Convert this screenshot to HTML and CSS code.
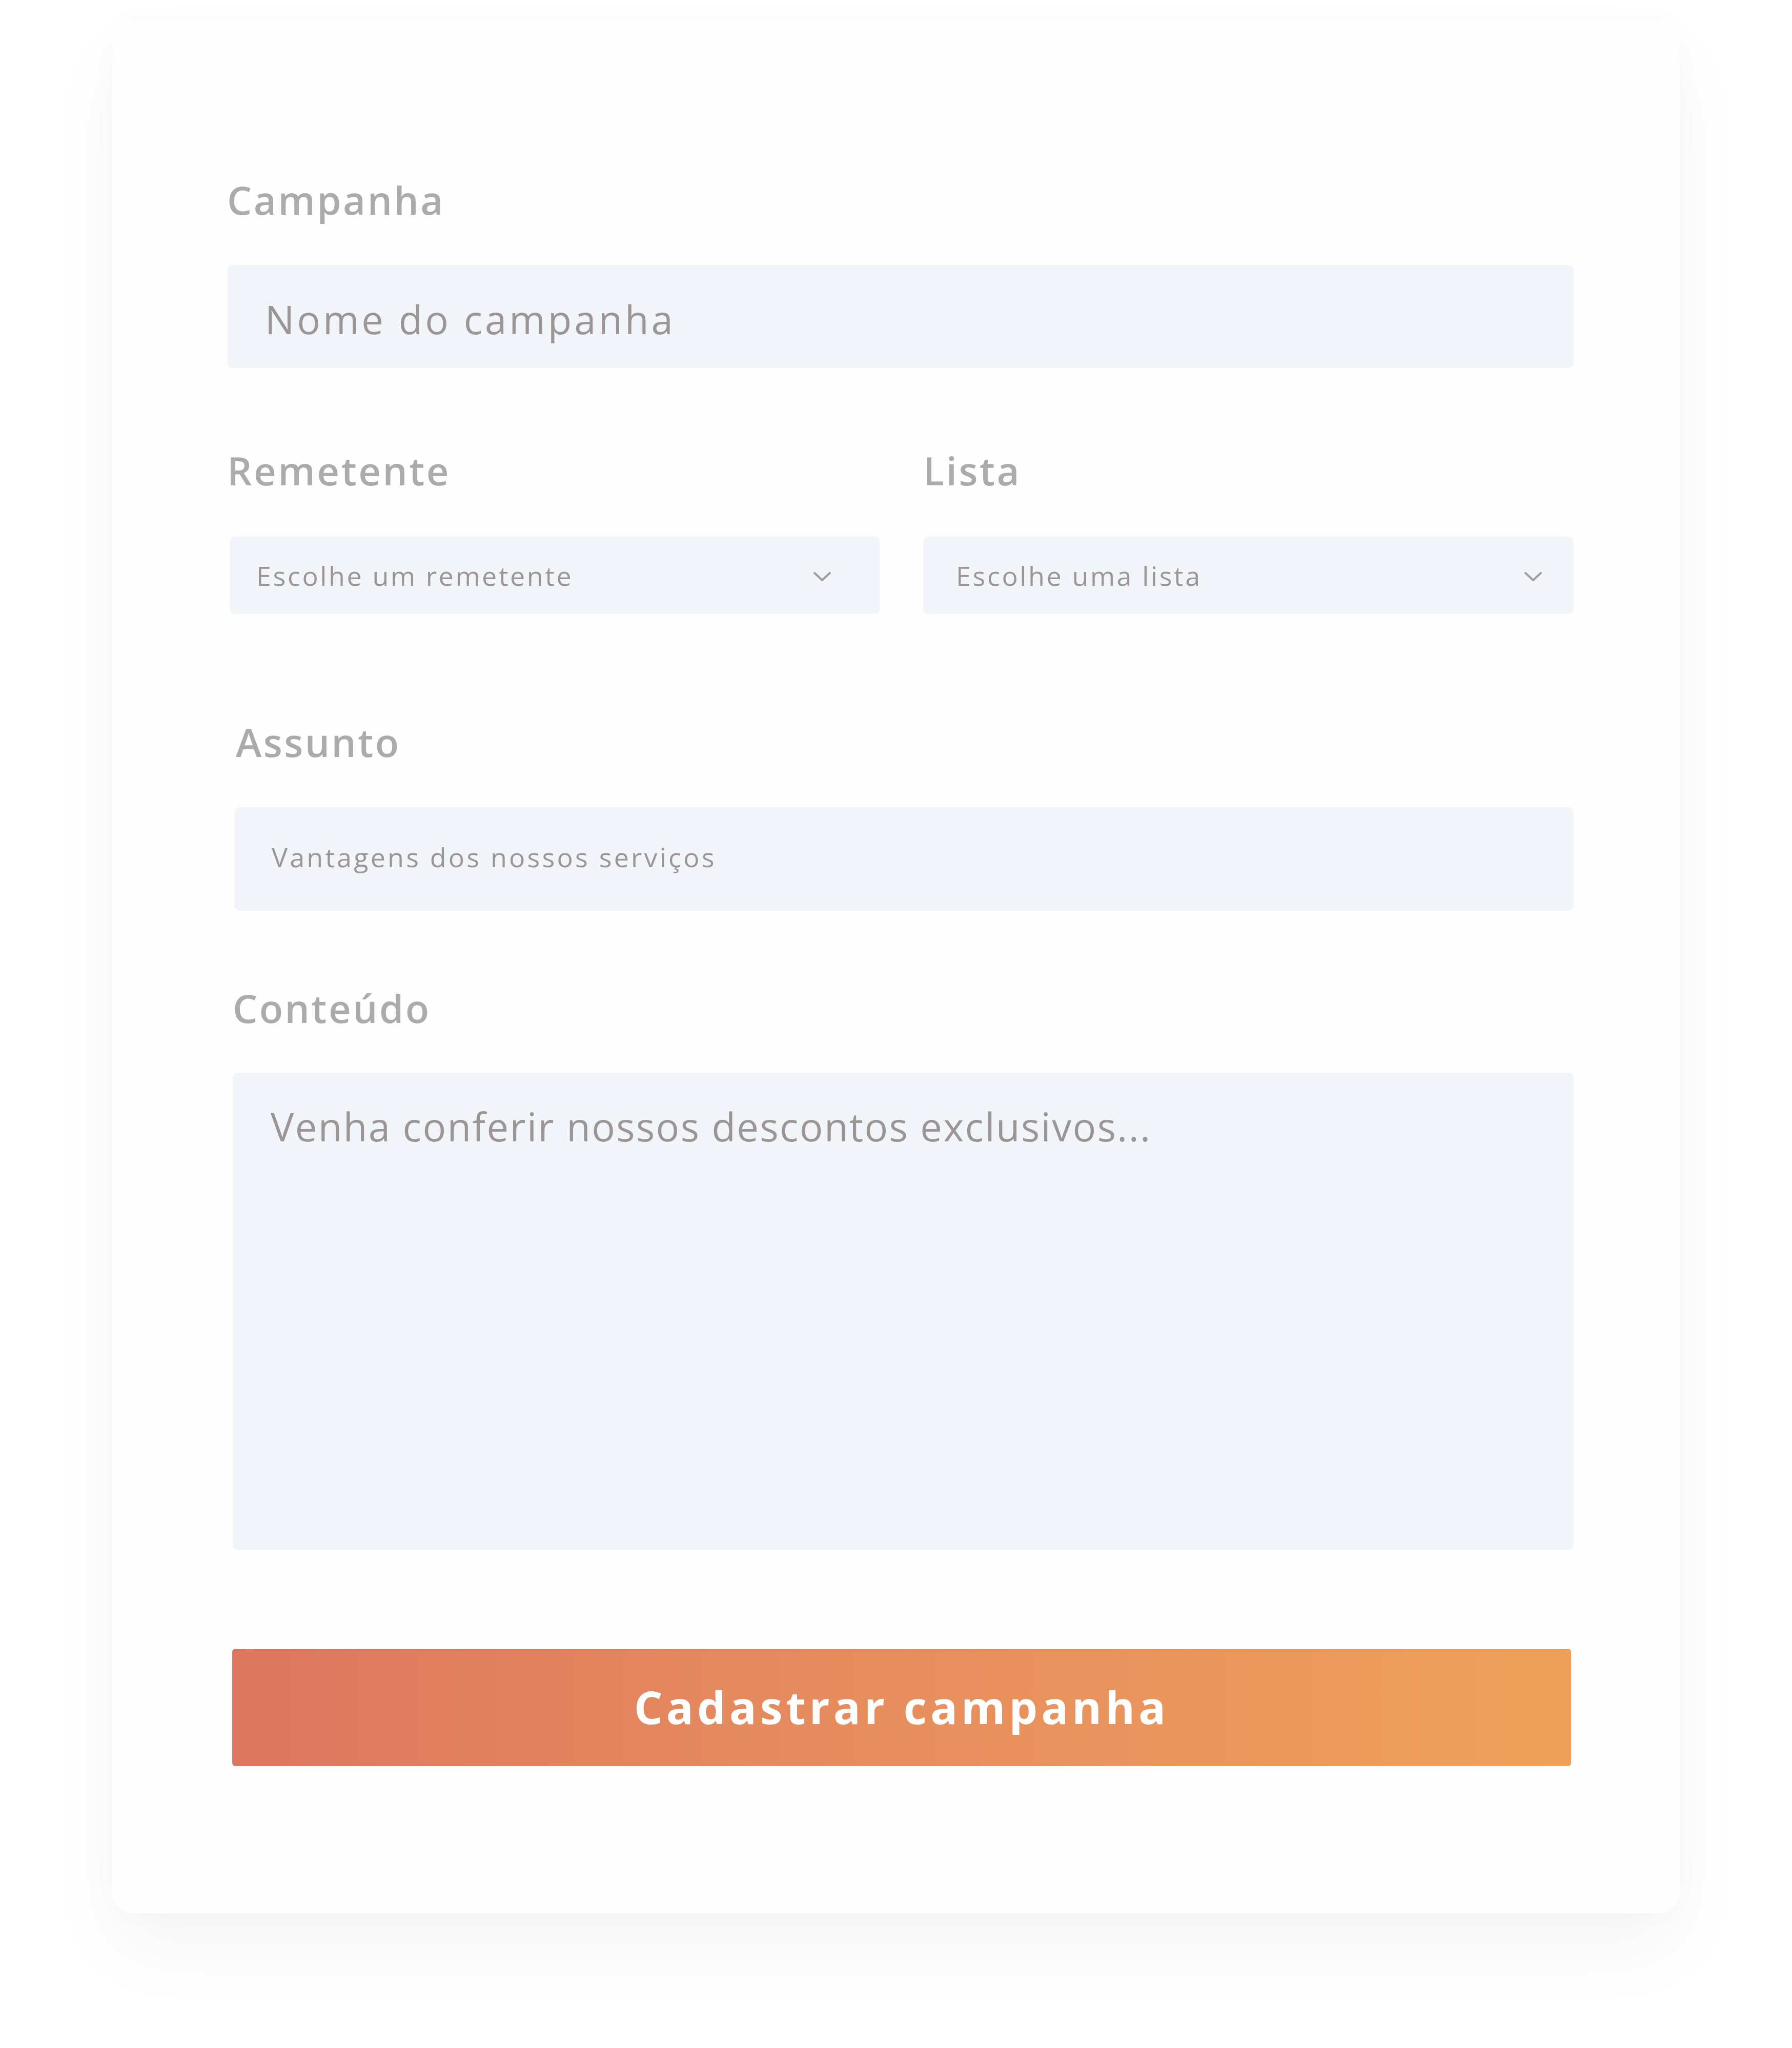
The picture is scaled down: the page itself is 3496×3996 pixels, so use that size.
FILE: index.html
```html
<!DOCTYPE html>
<html lang="pt">
<head>
<meta charset="utf-8">
<title>Cadastrar campanha</title>
<link rel="stylesheet" href="styles.css">
</head>
<body>
<div class="page">
  <form class="card">
    <div class="field">
      <label class="label">Campanha</label>
      <div class="input input--lg">Nome do campanha</div>
    </div>

    <div class="row">
      <div class="field">
        <label class="label">Remetente</label>
        <div class="select select--a">
          <span class="select-text">Escolhe um remetente</span>
          <svg class="chev" viewBox="0 0 36 20" width="36" height="20"><path d="M3 3 L18 17 L33 3" fill="none" stroke="#a39c9c" stroke-width="4" stroke-linecap="round" stroke-linejoin="round"/></svg>
        </div>
      </div>
      <div class="field">
        <label class="label">Lista</label>
        <div class="select select--b">
          <span class="select-text">Escolhe uma lista</span>
          <svg class="chev" viewBox="0 0 36 20" width="36" height="20"><path d="M3 3 L18 17 L33 3" fill="none" stroke="#a39c9c" stroke-width="4" stroke-linecap="round" stroke-linejoin="round"/></svg>
        </div>
      </div>
    </div>

    <div class="field field--assunto">
      <label class="label">Assunto</label>
      <div class="input input--sm">Vantagens dos nossos serviços</div>
    </div>

    <div class="field field--conteudo">
      <label class="label">Conteúdo</label>
      <div class="textarea">Venha conferir nossos descontos exclusivos...</div>
    </div>

    <button type="button" class="btn">Cadastrar campanha</button>
  </form>
</div>
</body>
</html>
```

FILE: styles.css
```css
html, body {
  margin: 0;
  padding: 0;
  background: #ffffff;
}
body {
  width: 3496px;
  height: 3996px;
  overflow: hidden;
  font-family: "Open Sans", "Noto Sans", sans-serif;
}
.page {
  padding-top: 40px;
  display: flex;
  justify-content: center;
}
.card {
  box-sizing: border-box;
  width: 3058px;
  height: 3693px;
  background: #fefefe;
  border-radius: 40px;
  box-shadow: 0 70px 150px rgba(0, 0, 0, 0.045), 0 0 60px rgba(0, 0, 0, 0.02);
  padding: 312px 207px 0 224px;
  display: flex;
  flex-direction: column;
}
.field {
  display: flex;
  flex-direction: column;
}
.label {
  display: block;
  font-size: 76px;
  line-height: 1;
  font-weight: 600;
  color: #ababab;
  letter-spacing: 3.5px;
  margin-bottom: 89px;
}
.input {
  box-sizing: border-box;
  background: #f1f4f9;
  border-radius: 10px;
  display: flex;
  align-items: center;
  color: #9c9595;
  line-height: 1;
}
.input--lg {
  height: 201px;
  font-size: 76px;
  letter-spacing: 5px;
  padding: 10px 0 0 74px;
}
.input--sm {
  height: 202px;
  font-size: 52px;
  letter-spacing: 4.2px;
  padding: 0 0 8px 73px;
}
.row {
  display: grid;
  grid-template-columns: 1274px 1269px;
  column-gap: 84px;
  margin-top: 162px;
}
.select {
  box-sizing: border-box;
  height: 151px;
  background: #f1f4f9;
  border-radius: 10px;
  display: flex;
  align-items: center;
  justify-content: space-between;
  color: #9c9595;
  font-size: 52px;
  line-height: 1;
  letter-spacing: 3.6px;
}
.row .label { margin-bottom: 91px; }
.select--a { margin-left: 5px; padding: 0 95px 0 52px; }
.select--b { padding: 0 61px 0 64px; }
.chev { display: block; margin-top: 4px; }
.field--assunto { margin-top: 212px; margin-left: 14px; }
.field--assunto .label { margin-left: 3px; }
.field--conteudo { margin-top: 152px; margin-left: 11px; }
.field--conteudo .label { margin-bottom: 88px; }
.textarea {
  box-sizing: border-box;
  height: 931px;
  background: #f1f4f9;
  border-radius: 10px;
  padding: 67px 0 0 74px;
  font-size: 76px;
  line-height: 1;
  color: #9c9595;
  letter-spacing: 2.4px;
}
.btn {
  margin: 193px 5px 0 10px;
  height: 229px;
  border: 0;
  border-radius: 6px;
  background: linear-gradient(90deg, #dd775f 0%, #e58a5e 40%, #efa15a 100%);
  color: #ffffff;
  font-family: "Open Sans", "Noto Sans", sans-serif;
  font-weight: 700;
  font-size: 88px;
  letter-spacing: 7px;
  line-height: 1;
  padding: 0 0 4px;
  cursor: pointer;
}
```
